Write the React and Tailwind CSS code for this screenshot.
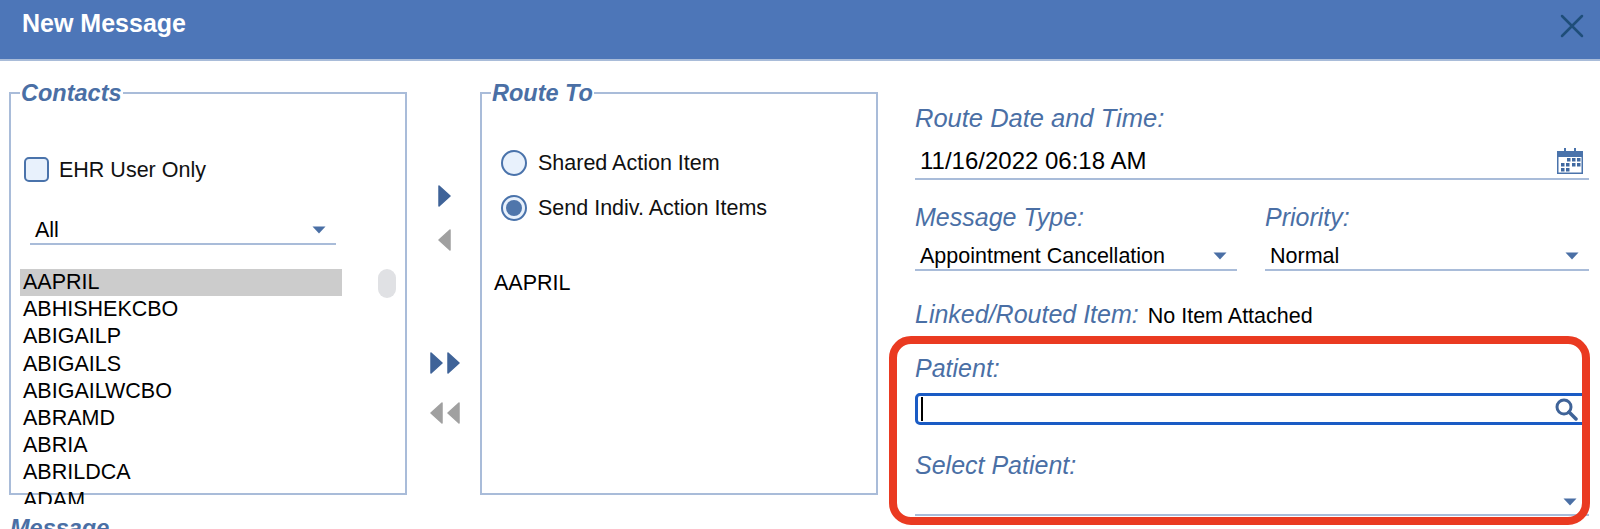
const labelCls = "text-[25px] leading-[28px] italic text-[#4a6fa5]";
const legendCls = "-ml-[1px] px-[1px] text-[23.5px] leading-[26px] font-bold italic text-[#4a6fa5]";
const bodyCls = "text-[21.5px] leading-[26px]";
const contacts = ["AAPRIL","ABHISHEKCBO","ABIGAILP","ABIGAILS","ABIGAILWCBO","ABRAMD","ABRIA","ABRILDCA","ADAM"];

function Caret({ className = "" }) {
  return (
    <svg width="14" height="8" viewBox="0 0 14 8" className={className}>
      <path d="M0.5 0.5H13.5L7 7.5Z" fill="#4a6fa5" />
    </svg>
  );
}

function Arrow({ left = false, color }) {
  return (
    <svg width="13" height="22" viewBox="0 0 13 22">
      <path
        d={left ? "M12 1V21L1 11Z" : "M1 1V21L12 11Z"}
        fill={color}
        stroke={color}
        strokeWidth="1.5"
        strokeLinejoin="round"
      />
    </svg>
  );
}

function Select({ value, className = "", textCls = "pl-[5px]" }) {
  return (
    <div className={`flex items-center justify-between border-b-2 border-[#a9bcd9] ${className}`}>
      <span className={`${bodyCls} text-black ${textCls}`}>{value}</span>
      <Caret className="mr-[10px]" />
    </div>
  );
}

function Radio({ checked, label }) {
  return (
    <div className="flex items-center gap-[11px] h-[26px]">
      <span className="flex items-center justify-center w-[26px] h-[26px] rounded-full border-2 border-[#4a73ab] bg-[#e8f1fc]">
        {checked && <span className="w-[16px] h-[16px] rounded-full bg-[#4f76ab]" />}
      </span>
      <span className={`${bodyCls} text-[#111]`}>{label}</span>
    </div>
  );
}

function Calendar() {
  return (
    <svg width="26" height="26" viewBox="0 0 26 26" className="mr-[6px]">
      <rect x="0.75" y="3.75" width="24.5" height="21.5" fill="#fff" stroke="#4a73ab" strokeWidth="1.5" />
      <rect x="0" y="3" width="26" height="6" fill="#4a73ab" />
      <rect x="7" y="0" width="2" height="6" fill="#4a73ab" />
      <rect x="17" y="0" width="2" height="6" fill="#4a73ab" />
      <g fill="#3f68a0">
        <rect x="10" y="10" width="3.5" height="3.5" />
        <rect x="15" y="10" width="3.5" height="3.5" />
        <rect x="20" y="10" width="3.5" height="3.5" />
        <rect x="4" y="15" width="3.5" height="3.5" />
        <rect x="9" y="15" width="3.5" height="3.5" />
        <rect x="15" y="15" width="3.5" height="3.5" />
        <rect x="20" y="15" width="3.5" height="3.5" />
        <rect x="4" y="20" width="3.5" height="3.5" />
        <rect x="9" y="20" width="3.5" height="3.5" />
      </g>
    </svg>
  );
}

export default function App() {
  return (
    <div
      className="relative w-[1600px] h-[529px] overflow-hidden bg-white"
      style={{ fontFamily: '"Liberation Sans", Arial, sans-serif' }}
    >
      <header className="flex justify-between h-[61px] bg-[#4d76b8] border-b-2 border-[#a9bcd9]">
        <h1 className="pl-[22px] pt-[8px] text-[25px] leading-[30px] font-bold text-white">New Message</h1>
        <svg width="24" height="24" viewBox="0 0 24 24" className="mt-[14px] mr-[16px]">
          <path d="M2 2L22 22M22 2L2 22" stroke="#1f4e79" strokeWidth="2.5" strokeLinecap="round" />
        </svg>
      </header>

      <div className="flex">
        <div className="w-[915px] shrink-0">
          <div className="flex pl-[9px] pt-[19px]">
            <fieldset className="w-[398px] h-[415px] border-2 border-[#a9bcd9] px-[10px] min-w-0">
              <legend className={legendCls}>Contacts</legend>
              <div className="flex items-center gap-[10px] mt-[51px] ml-[3px] h-[25px]">
                <span className="w-[25px] h-[25px] rounded-[5px] border-2 border-[#4a73ab] bg-[#e8f1fc]" />
                <span className={`${bodyCls} text-[#111]`}>EHR User Only</span>
              </div>
              <Select value="All" className="mt-[34px] ml-[9px] w-[306px] h-[29px]" />
              <div className="flex items-start justify-between mt-[24px] -ml-[1px] -mr-[1px]">
                <ul className="w-[322px] h-[235px] overflow-hidden">
                  {contacts.map((c, i) => (
                    <li
                      key={c}
                      className={`h-[27.2px] pl-[3px] ${bodyCls} leading-[27px] text-black ${i === 0 ? "bg-[#cccccc]" : ""}`}
                    >
                      {c}
                    </li>
                  ))}
                </ul>
                <span className="w-[18px] h-[29px] rounded-[9px] bg-[#e0e1e4]" />
              </div>
            </fieldset>

            <div className="flex flex-col items-center w-[73px] pl-[2px] pt-[105px]">
              <Arrow color="#3f6398" />
              <div className="mt-[22px]"><Arrow left color="#a0a0a0" /></div>
              <div className="flex gap-[4px] mt-[101px]">
                <Arrow color="#3f6398" />
                <Arrow color="#3f6398" />
              </div>
              <div className="flex gap-[4px] mt-[28px]">
                <Arrow left color="#a0a0a0" />
                <Arrow left color="#a0a0a0" />
              </div>
            </div>

            <fieldset className="w-[398px] h-[415px] border-2 border-[#a9bcd9] px-[10px] min-w-0">
              <legend className={legendCls}>Route To</legend>
              <div className="flex flex-col gap-[19px] mt-[44px] ml-[9px]">
                <Radio label="Shared Action Item" />
                <Radio checked label="Send Indiv. Action Items" />
              </div>
              <p className={`mt-[49px] ml-[2px] ${bodyCls} text-black`}>AAPRIL</p>
            </fieldset>
          </div>
          <p className="mt-[20px] ml-[10px] text-[23.5px] leading-[26px] font-bold italic text-[#4a6fa5]">Message</p>
        </div>

        <div className="w-[674px] shrink-0 pt-[43px]">
          <div className="text-[25.5px] leading-[28px] italic text-[#4a6fa5]">Route Date and Time:</div>
          <div className="flex items-center justify-between mt-[12px] h-[36px] pb-[1px] border-b-2 border-[#a9bcd9]">
            <span className="pl-[5px] text-[24px] leading-[28px] text-black">11/16/2022 06:18 AM</span>
            <Calendar />
          </div>
          <div className="flex justify-between mt-[23px]">
            <div className="w-[322px]">
              <div className={labelCls}>Message Type:</div>
              <Select value="Appointment Cancellation" className="mt-[12px] h-[28px]" />
            </div>
            <div className="w-[324px]">
              <div className={labelCls}>Priority:</div>
              <Select value="Normal" className="mt-[12px] h-[28px]" />
            </div>
          </div>
          <div className="flex items-baseline gap-[9px] mt-[29px]">
            <span className={labelCls}>Linked/Routed Item:</span>
            <span className={`${bodyCls} text-black`}>No Item Attached</span>
          </div>
          <div className={`${labelCls} mt-[25px]`}>Patient:</div>
          <div className="flex items-center justify-between mt-[11px] h-[32px] border-[3px] border-[#1a5bc4] rounded-[5px] pl-[3px] pr-[8px]">
            <span className="w-[1.5px] h-[24px] bg-black" />
            <svg width="24" height="24" viewBox="0 0 24 24">
              <circle cx="10" cy="10" r="7" fill="none" stroke="#3f6398" strokeWidth="3" />
              <path d="M15 15L22 22" stroke="#3f6398" strokeWidth="3.5" strokeLinecap="round" />
            </svg>
          </div>
          <div className={`${labelCls} mt-[26px]`}>Select Patient:</div>
          <div className="flex justify-end items-center h-[27px] mt-[10px] border-b-2 border-[#a9bcd9]">
            <Caret className="mr-[12px]" />
          </div>
        </div>
      </div>

      <div className="absolute left-[889px] top-[336px] w-[701px] h-[189px] rounded-[22px] border-[8px] border-[#ea3a21] pointer-events-none" />
    </div>
  );
}
